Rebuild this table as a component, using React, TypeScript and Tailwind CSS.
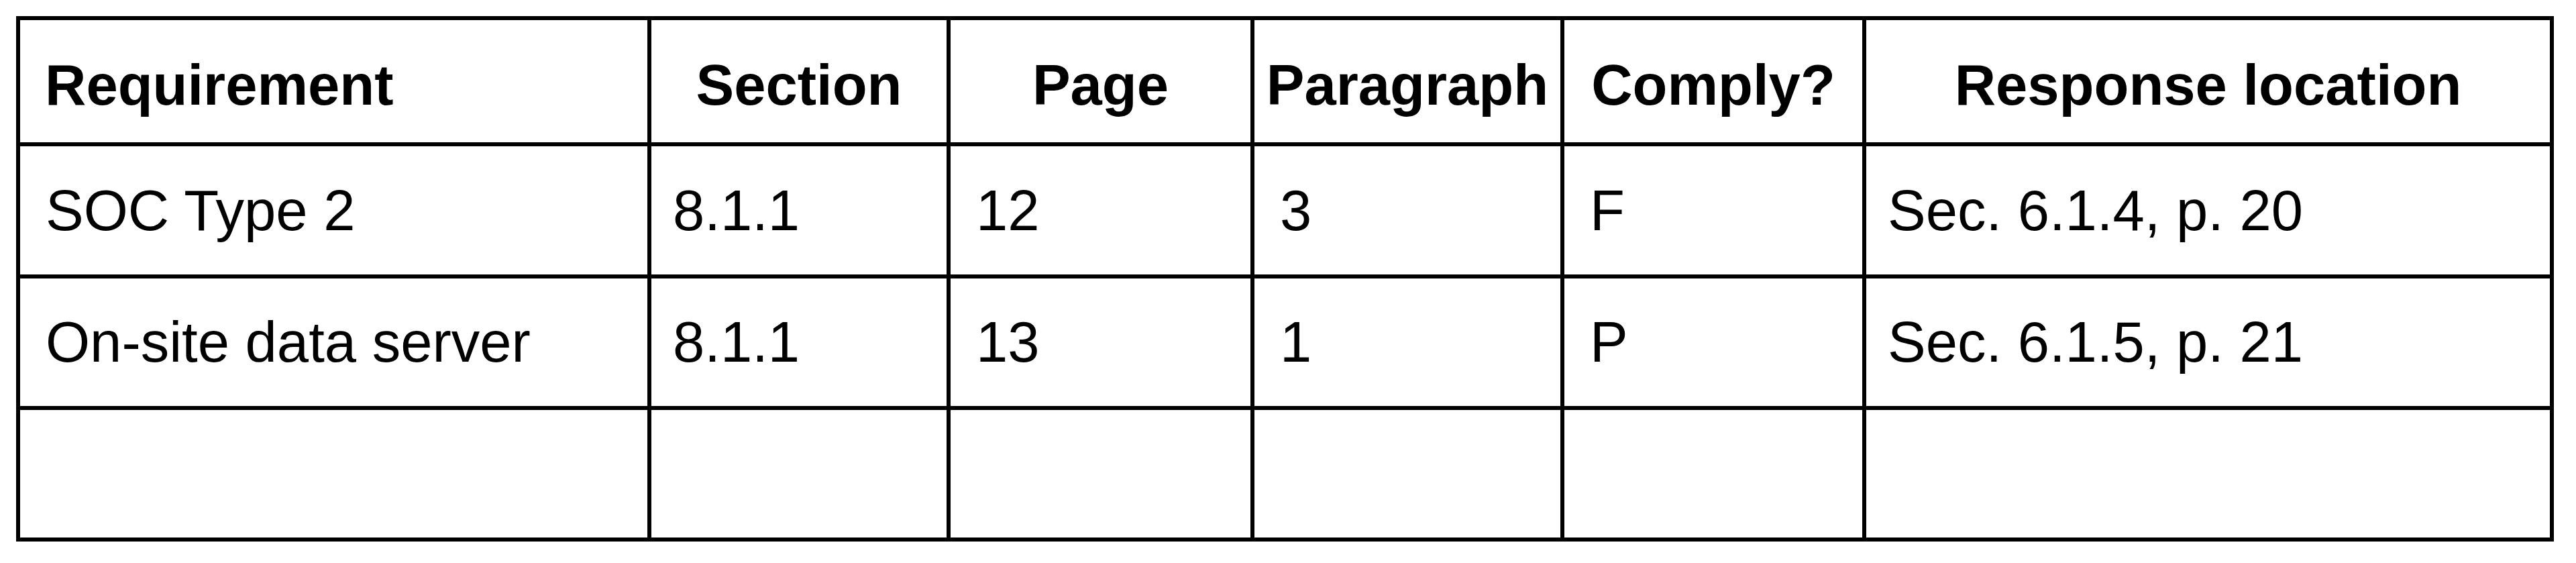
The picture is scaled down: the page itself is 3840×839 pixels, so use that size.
import React from "react";

const headers = ["Requirement", "Section", "Page", "Paragraph", "Comply?", "Response location"];
const rows: string[][] = [
  ["SOC Type 2", "8.1.1", "12", "3", "F", "Sec. 6.1.4, p. 20"],
  ["On-site data server", "8.1.1", "13", "1", "P", "Sec. 6.1.5, p. 21"],
  ["", "", "", "", "", ""],
];

const padClasses = ["pl-[38px]", "pl-[32px]", "pl-[38px]", "pl-[38px]", "pl-[38px]", "pl-[32px]"];

export default function App() {
  return (
    <div
      className="w-[3840px] h-[839px] bg-white text-black"
      style={{ fontFamily: '"Liberation Sans", Arial, sans-serif' }}
    >
      <div className="pt-[24px] pl-[24px]">
        <div className="inline-grid bg-black p-[6px] gap-[6px] grid-cols-[935px_440px_447px_456px_444px_1019px] grid-rows-[182px_191px_190px_190px]">
          {headers.map((h, i) => (
            <div
              key={h}
              className={
                "bg-white flex items-center pt-[12px] font-bold text-[85px] leading-[1.15] whitespace-nowrap " +
                (i === 0 ? "justify-start pl-[37px]" : "justify-center")
              }
            >
              {h}
            </div>
          ))}
          {rows.map((r, ri) =>
            r.map((c, ci) => (
              <div
                key={ri + "-" + ci}
                className={
                  "bg-white flex items-center text-[85px] leading-[1.15] whitespace-nowrap " + padClasses[ci]
                }
              >
                {c}
              </div>
            ))
          )}
        </div>
      </div>
    </div>
  );
}
